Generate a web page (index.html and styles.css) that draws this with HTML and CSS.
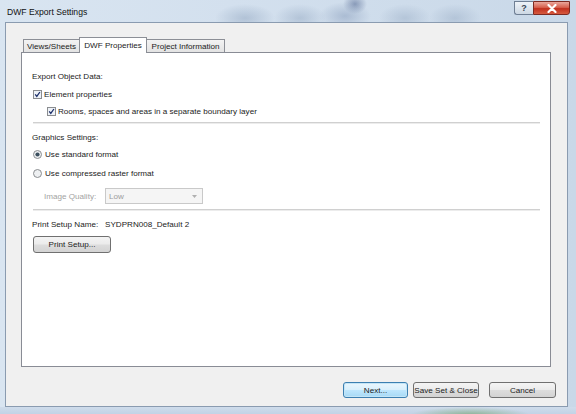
FILE: index.html
```html
<!DOCTYPE html>
<html>
<head>
<meta charset="utf-8">
<link rel="stylesheet" href="styles.css">
</head>
<body>
<div class="window">
  <div class="titlebar">
    <span class="title">DWF Export Settings</span>
    <div class="caption">
      <div class="cbtn help">?</div>
      <div class="cbtn close">
        <svg width="10" height="9" viewBox="0 0 10 9"><path d="M1.5 1 L8.5 8 M8.5 1 L1.5 8" stroke="#ffffff" stroke-width="2.2" stroke-linecap="round"/></svg>
      </div>
    </div>
  </div>
  <div class="client">
    <div class="tabs">
      <div class="tab tab-views">Views/Sheets</div>
      <div class="tab tab-active">DWF Properties</div>
      <div class="tab tab-project">Project Information</div>
    </div>
    <div class="panel">
      <div class="row heading">Export Object Data:</div>
      <div class="row check row-element">
        <svg class="box" width="9" height="9" viewBox="0 0 9 9"><rect x="0.5" y="0.5" width="8" height="8" fill="#eef2f7" stroke="#8b8d90"/><path d="M2.2 4.3 L3.8 6.4 L6.9 2" fill="none" stroke="#1d2f6b" stroke-width="1.3"/></svg>
        <span>Element properties</span>
      </div>
      <div class="row check row-rooms">
        <svg class="box" width="9" height="9" viewBox="0 0 9 9"><rect x="0.5" y="0.5" width="8" height="8" fill="#eef2f7" stroke="#8b8d90"/><path d="M2.2 4.3 L3.8 6.4 L6.9 2" fill="none" stroke="#1d2f6b" stroke-width="1.3"/></svg>
        <span>Rooms, spaces and areas in a separate boundary layer</span>
      </div>
      <div class="sep sep-first"></div>
      <div class="row heading heading-graphics">Graphics Settings:</div>
      <div class="row radio row-standard">
        <svg class="dot" width="9" height="9" viewBox="0 0 9 9"><circle cx="4.5" cy="4.5" r="4" fill="#eef0f2" stroke="#8b8d90"/><circle cx="4.5" cy="4.5" r="2.1" fill="#3b4f5e"/></svg>
        <span>Use standard format</span>
      </div>
      <div class="row radio row-compressed">
        <svg class="dot" width="9" height="9" viewBox="0 0 9 9"><circle cx="4.5" cy="4.5" r="4" fill="#eef0f2" stroke="#8b8d90"/></svg>
        <span>Use compressed raster format</span>
      </div>
      <div class="row quality">
        <span class="disabled-label">Image Quality:</span>
        <div class="select">
          <span>Low</span>
          <svg width="5" height="3" viewBox="0 0 5 3"><path d="M0 0 L5 0 L2.5 3 Z" fill="#b0b0b0"/></svg>
        </div>
      </div>
      <div class="sep sep-second"></div>
      <div class="row print-name">
        <span class="name-label">Print Setup Name:</span>
        <span>SYDPRN008_Default 2</span>
      </div>
      <div class="btn btn-print">Print Setup...</div>
    </div>
    <div class="buttons">
      <div class="btn btn-next">Next...</div>
      <div class="btn btn-save">Save Set &amp; Close</div>
      <div class="btn btn-cancel">Cancel</div>
    </div>
  </div>
  <div class="bottom-frame"></div>
</div>
</body>
</html>
```
FILE: styles.css
```css
html, body {
  margin: 0;
  padding: 0;
}
body {
  width: 576px;
  height: 414px;
  overflow: hidden;
  font-family: "Liberation Sans", Arial, sans-serif;
  font-size: 8.1px;
  color: #1b1b1b;
}
.window {
  width: 576px;
  height: 414px;
  display: flex;
  flex-direction: column;
  background:
    radial-gradient(ellipse 30px 14px at 245px 18px, rgba(150,170,195,0.55), rgba(150,170,195,0) 100%),
    radial-gradient(ellipse 26px 14px at 300px 18px, rgba(150,170,195,0.5), rgba(150,170,195,0) 100%),
    radial-gradient(ellipse 26px 14px at 345px 16px, rgba(140,160,190,0.55), rgba(140,160,190,0) 100%),
    radial-gradient(ellipse 12px 10px at 355px 4px, rgba(90,110,150,0.6), rgba(90,110,150,0) 100%),
    radial-gradient(ellipse 26px 14px at 405px 18px, rgba(150,170,195,0.45), rgba(150,170,195,0) 100%),
    radial-gradient(ellipse 26px 14px at 455px 18px, rgba(150,170,195,0.45), rgba(150,170,195,0) 100%),
    linear-gradient(to right, #d9e5f1 0%, #d3e0ee 40%, #c9d8e8 100%);
}
.titlebar {
  height: 22px;
  display: flex;
  justify-content: space-between;
  align-items: flex-start;
  flex: none;
}
.title {
  font-size: 8.6px;
  color: #111;
  margin-left: 7px;
  margin-top: 7px;
}
.caption {
  display: flex;
  margin-right: 6px;
  margin-top: 1px;
}
.cbtn {
  height: 14px;
  display: flex;
  align-items: center;
  justify-content: center;
  border: 1px solid #6f7f94;
  box-sizing: border-box;
}
.help {
  width: 19px;
  border-radius: 0 0 0 3px;
  border-right: none;
  background: linear-gradient(#eef3f8, #cdd8e4);
  color: #3a4656;
  font-size: 9px;
  font-weight: bold;
}
.close {
  width: 37px;
  border-radius: 0 0 3px 0;
  background: linear-gradient(#eaa79c 0%, #d7614f 45%, #c1301f 55%, #d65a3f 100%);
  border-color: #7d2a22;
}
.client {
  flex: none;
  height: 385px;
  margin: 0 8px 0 5px;
  background: #f0f0f0;
  border: 1px solid #8a9bb0;
  box-sizing: border-box;
  display: flex;
  flex-direction: column;
}
.tabs {
  display: flex;
  align-items: flex-end;
  margin: 14px 0 0 17px;
  height: 15px;
  position: relative;
  z-index: 1;
}
.tab {
  box-sizing: border-box;
  height: 13px;
  border: 1px solid #8c8f96;
  border-bottom: none;
  background: linear-gradient(#f3f3f3, #e3e3e3);
  display: flex;
  align-items: center;
  justify-content: center;
  padding-top: 1px;
}
.tab-views {
  width: 56px;
  border-right: none;
}
.tab-active {
  width: 68px;
  height: 16px;
  margin-bottom: -1px;
  background: #ffffff;
  padding-bottom: 2px;
}
.tab-project {
  width: 78px;
  border-left: none;
}
.panel {
  box-sizing: border-box;
  margin-left: 15px;
  width: 530px;
  height: 315px;
  border: 1px solid #898c95;
  background: #ffffff;
  padding: 16px 10px 0 10px;
  display: flex;
  flex-direction: column;
}
.row {
  height: 14px;
  display: flex;
  align-items: center;
  white-space: nowrap;
}
.check .box {
  margin-left: 1px;
  margin-right: 2px;
  flex: none;
}
.radio .dot {
  margin-left: 1px;
  margin-right: 3px;
  flex: none;
}
.row-element {
  margin-top: 4px;
}
.row-rooms {
  margin-top: 3px;
  padding-left: 14px;
}
.sep {
  height: 0;
  margin-left: 1px;
  border-top: 1px solid #d0d0d0;
  border-bottom: 1px solid #ececec;
}
.sep-first {
  margin-top: 4px;
}
.heading-graphics {
  margin-top: 6px;
}
.row-standard {
  margin-top: 3px;
}
.row-compressed {
  margin-top: 5px;
}
.quality {
  margin-top: 8px;
  height: 16px;
  padding-left: 12px;
}
.disabled-label {
  color: #a3a3a3;
  width: 61px;
}
.select {
  box-sizing: border-box;
  width: 98px;
  height: 16px;
  border: 1px solid #c9c9c9;
  background: #f5f5f5;
  display: flex;
  align-items: center;
  justify-content: space-between;
  padding: 0 5px 0 3px;
  color: #9c9c9c;
}
.sep-second {
  margin-top: 5px;
}
.print-name {
  margin-top: 6px;
}
.name-label {
  width: 73px;
}
.btn {
  box-sizing: border-box;
  display: flex;
  align-items: center;
  justify-content: center;
  border: 1px solid #707070;
  border-radius: 3px;
  background: linear-gradient(#f4f4f4 0%, #ebebeb 48%, #dddddd 52%, #d3d3d3 100%);
  white-space: nowrap;
}
.btn-print {
  margin-top: 5px;
  margin-left: 1px;
  width: 78px;
  height: 17px;
}
.buttons {
  display: flex;
  justify-content: flex-end;
  margin-top: 15px;
  padding-right: 11px;
}
.buttons .btn {
  height: 16px;
}
.btn-next {
  width: 65px;
  border-color: #3c7fb1;
  background: linear-gradient(#eaf6fd 0%, #d9f0fc 48%, #bee6fd 52%, #a7d9f5 100%);
  box-shadow: inset 0 0 0 1px #c4e5f6;
}
.btn-save {
  width: 66px;
  margin-left: 5px;
}
.btn-cancel {
  width: 67px;
  margin-left: 10px;
}
.bottom-frame {
  flex: 1;
  background:
    radial-gradient(ellipse 60px 8px at 470px 8px, rgba(96,150,80,0.55), rgba(96,150,80,0) 100%),
    linear-gradient(#cfdceb, #c2d3e6);
}
```
